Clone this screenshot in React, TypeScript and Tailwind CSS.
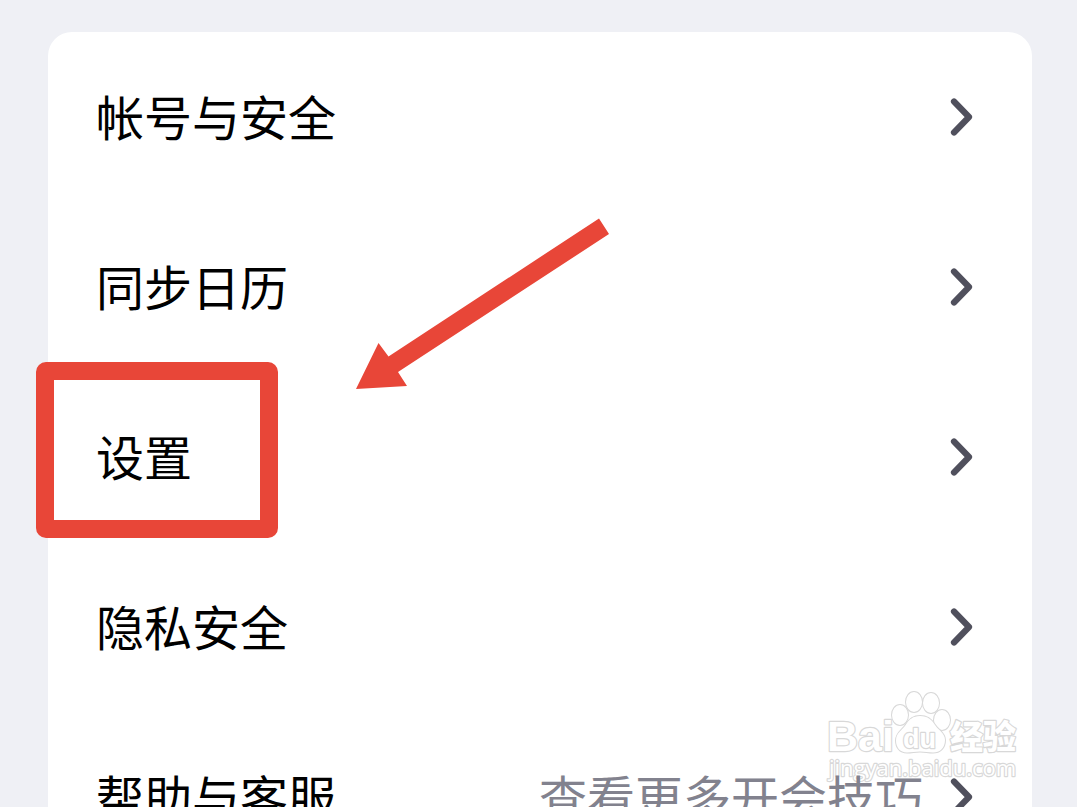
type MenuItem = {
  label: string
  hint?: string
  highlighted?: boolean
}

const items: MenuItem[] = [
  { label: '帐号与安全' },
  { label: '同步日历' },
  { label: '设置', highlighted: true },
  { label: '隐私安全' },
  { label: '帮助与客服', hint: '查看更多开会技巧' },
]

function Chevron() {
  return (
    <svg className="h-10 w-6 shrink-0" viewBox="0 0 24 40" fill="none" aria-hidden="true">
      <path d="M5 4.500 20 20 5 35.500" stroke="#50505d" strokeWidth="6.200" strokeLinecap="round" strokeLinejoin="round" />
    </svg>
  )
}

function MenuRow({ label, hint, highlighted }: MenuItem) {
  return (
    <li className="relative">
      <button type="button" className="flex h-[170px] w-full items-center gap-[26px] pl-12 pr-[59px] text-left">
        <span className="flex-1 pb-1 text-[48px] leading-none text-black">{label}</span>
        {hint && <span className="pb-1 text-[48px] leading-none text-[#82828e]">{hint}</span>}
        <Chevron />
      </button>
      {highlighted && (
        <div className="pointer-events-none absolute -left-3 -top-[10px] h-44 w-[242px] rounded-[10px] border-[18px] border-[#e84638]" />
      )}
    </li>
  )
}

function Arrow() {
  return (
    <svg className="pointer-events-none absolute left-[308px] top-[186px] h-[172px] w-[254px]" viewBox="0 0 254 172" aria-hidden="true">
      <path d="M0 171 22.5 125 32.5 138.500 243 .5 253 16 42 154 51 168Z" fill="#e84638" />
    </svg>
  )
}

function Watermark() {
  return (
    <svg
      className="pointer-events-none absolute right-[9px] top-[657px] h-[96px] w-[200px]"
      viewBox="0 0 200 96"
      role="img"
      aria-label="Baidu 经验"
      fill="#ffffff"
      stroke="#d8d8d8"
      strokeWidth="2.400"
      strokeLinejoin="round"
      paintOrder="stroke"
    >
      <text x="4" y="62" fontSize="43" fontWeight="700" fontFamily="'Liberation Sans', sans-serif">Bai</text>
      <g strokeWidth="2">
        <ellipse cx="77" cy="26" rx="8" ry="10" />
        <ellipse cx="91" cy="13" rx="8" ry="10" />
        <ellipse cx="108" cy="14" rx="8" ry="10" />
        <ellipse cx="119" cy="31" rx="8" ry="10" />
        <path d="M97 27c8 0 12 4 15 9 3 5 10 8 10 15 0 8-5 12.500-12 12.500-5 0-8-1-13-1s-8 1-13 1c-7 0-11-5-11-12 0-8 7-11 10-16 3-5 7-8.500 14-8.500Z" />
      </g>
      <text x="80" y="59" fontSize="27" fontWeight="700" fontFamily="'Liberation Sans', sans-serif">du</text>
      <text x="127" y="60" fontSize="33" fontWeight="900" fontFamily="'Noto Sans CJK SC', sans-serif">经验</text>
      <text x="6" y="87" fontSize="22" fontWeight="500" fontFamily="'Open Sans', sans-serif">jingyan.baidu.com</text>
    </svg>
  )
}

export default function App() {
  return (
    <main className="h-screen overflow-hidden bg-[#eff0f5] pl-12 pr-[45px] pt-8 font-['Noto_Sans_CJK_SC',sans-serif]">
      <div className="relative rounded-t-[24px] bg-white">
        <Watermark />
        <ul className="relative">
          {items.map((item) => (
            <MenuRow key={item.label} {...item} />
          ))}
        </ul>
        <Arrow />
      </div>
    </main>
  )
}
